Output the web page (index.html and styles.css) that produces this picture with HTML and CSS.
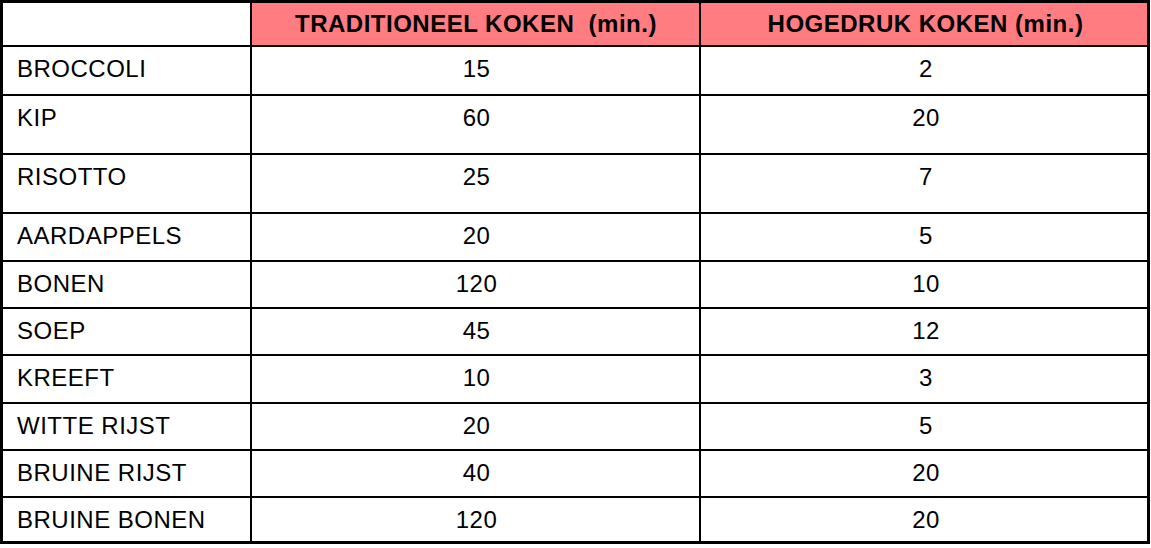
FILE: index.html
```html
<!DOCTYPE html>
<html lang="nl">
<head>
<meta charset="utf-8">
<title>Kooktijden</title>
<link rel="stylesheet" href="styles.css">
</head>
<body>
<table class="times">
  <colgroup>
    <col class="c-name">
    <col class="c-trad">
    <col class="c-hoge">
  </colgroup>
  <thead>
    <tr class="r-head">
      <th class="blank"></th>
      <th>TRADITIONEEL KOKEN &nbsp;(min.)</th>
      <th class="last">HOGEDRUK KOKEN (min.)</th>
    </tr>
  </thead>
  <tbody>
    <tr class="r-49"><td class="name">BROCCOLI</td><td>15</td><td class="last">2</td></tr>
    <tr class="r-59"><td class="name">KIP</td><td>60</td><td class="last">20</td></tr>
    <tr class="r-59"><td class="name">RISOTTO</td><td>25</td><td class="last">7</td></tr>
    <tr class="r-48"><td class="name">AARDAPPELS</td><td>20</td><td class="last">5</td></tr>
    <tr class="r-47"><td class="name">BONEN</td><td>120</td><td class="last">10</td></tr>
    <tr class="r-47"><td class="name">SOEP</td><td>45</td><td class="last">12</td></tr>
    <tr class="r-48"><td class="name">KREEFT</td><td>10</td><td class="last">3</td></tr>
    <tr class="r-47"><td class="name">WITTE RIJST</td><td>20</td><td class="last">5</td></tr>
    <tr class="r-47"><td class="name">BRUINE RIJST</td><td>40</td><td class="last">20</td></tr>
    <tr class="r-last"><td class="name">BRUINE BONEN</td><td>120</td><td class="last">20</td></tr>
  </tbody>
</table>
</body>
</html>
```
FILE: styles.css
```css
html, body {
  margin: 0;
  padding: 0;
  background: #ffffff;
}

.times {
  border-collapse: separate;
  border-spacing: 0;
  border: 3px solid #000;
  table-layout: fixed;
  width: 1150px;
  font-family: "Liberation Sans", Arial, sans-serif;
  font-size: 24px;
  letter-spacing: 0.5px;
  line-height: 26px;
  color: #000;
}

.c-name { width: 249px; }
.c-trad { width: 449px; }
.c-hoge { width: 446px; }

.times th,
.times td {
  box-sizing: border-box;
  border-right: 2px solid #000;
  border-bottom: 2px solid #000;
  padding: 9px 0 0 2px;
  vertical-align: top;
  text-align: center;
}

.times td.last {
  padding-left: 4px;
}

.times th {
  background: #ff7c80;
  font-weight: bold;
  vertical-align: middle;
  padding: 0 0 0 1px;
}

.times th.last {
  padding-left: 3px;
}

.times th.blank {
  background: #ffffff;
}

.times .last {
  border-right: none;
}

.times td.name {
  text-align: left;
  padding-left: 14px;
}

.r-head { height: 44px; }
.r-49 { height: 49px; }
.r-59 { height: 59px; }
.r-48 { height: 48px; }
.r-47 { height: 47px; }
.r-last { height: 43px; }

.r-last td {
  border-bottom: none;
}
```
